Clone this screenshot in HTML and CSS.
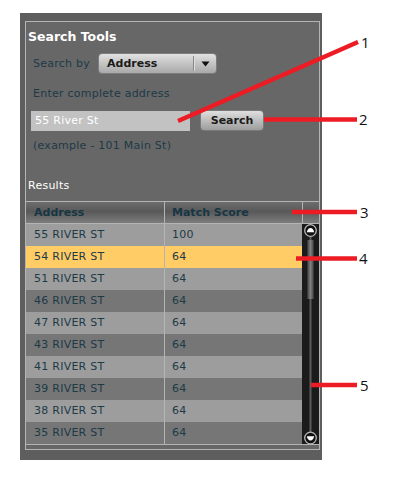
FILE: index.html
```html
<!DOCTYPE html>
<html lang="en">
<head>
  <meta charset="UTF-8" />
  <title>Search Tools</title>
  <link rel="stylesheet" href="styles.css">
</head>
<body>
  <div class="panel">
    <div class="frame">
      <h2 class="title">Search Tools</h2>

      <div class="search-by">
        <span class="label">Search by</span>
        <div class="select">
          <span class="select-value">Address</span>
          <span class="select-sep"></span>
          <svg class="select-arrow" width="9" height="6" viewBox="0 0 9 6"><path d="M0.5 0.5 H8.5 L4.5 5.5 Z" fill="#111"/></svg>
        </div>
      </div>

      <div class="hint">Enter complete address</div>
      <div class="search-row">
        <div class="input">55 River St</div>
        <button class="btn">Search</button>
      </div>
      <div class="hint example">(example - 101 Main St)</div>

      <div class="results-label">Results</div>

      <div class="results">
        <div class="thead">
          <div class="th c1">Address</div>
          <div class="th c2">Match Score</div>
          <div class="th c3"></div>
        </div>
        <div class="tbody">
          <div class="rows" id="rows"></div>
          <svg class="scrollbar" width="17" height="220" viewBox="0 0 17 220">
            <rect width="17" height="220" fill="#1b1b1b"/>
            <line x1="8.5" y1="12" x2="8.5" y2="210" stroke="#5c5c5c" stroke-width="2"/>
            <rect x="5.5" y="16" width="6" height="59" fill="#5a5a5a"/>
            <line x1="8.5" y1="16" x2="8.5" y2="75" stroke="#808080" stroke-width="2"/>
            <circle cx="8.5" cy="6.5" r="5.8" fill="#111" stroke="#b8b8b8" stroke-width="1.3"/>
            <path d="M4.8 8.3 Q5.6 4.2 8.5 4 Q11.4 4.2 12.2 8.3 Z" fill="#fff"/>
            <circle cx="8.5" cy="214" r="5.8" fill="#111" stroke="#b8b8b8" stroke-width="1.3"/>
            <path d="M4.8 212.2 Q5.6 216.3 8.5 216.5 Q11.4 216.3 12.2 212.2 Z" fill="#fff"/>
          </svg>
        </div>
      </div>
    </div>
  </div>

  <svg class="callouts" width="413" height="492" viewBox="0 0 413 492">
    <g stroke="#ed1c24" stroke-width="4.5" stroke-linecap="butt">
      <line x1="178" y1="121" x2="358" y2="42"/>
      <line x1="264" y1="119.5" x2="357" y2="119.5"/>
      <line x1="292" y1="212" x2="357" y2="212"/>
      <line x1="296" y1="258.5" x2="357" y2="258.5"/>
      <line x1="311" y1="385" x2="357" y2="385"/>
    </g>
    <g class="callout-num">
      <text x="361" y="48">1</text>
      <text x="359" y="125">2</text>
      <text x="360" y="218">3</text>
      <text x="359" y="264">4</text>
      <text x="360" y="391">5</text>
    </g>
  </svg>

  <script>
    const results = [
      ["55 RIVER ST", "100"],
      ["54 RIVER ST", "64"],
      ["51 RIVER ST", "64"],
      ["46 RIVER ST", "64"],
      ["47 RIVER ST", "64"],
      ["43 RIVER ST", "64"],
      ["41 RIVER ST", "64"],
      ["39 RIVER ST", "64"],
      ["38 RIVER ST", "64"],
      ["35 RIVER ST", "64"]
    ];

    const rows = document.getElementById("rows");
    results.forEach((r, i) => {
      const div = document.createElement("div");
      div.className = "row" + (i % 2 ? " odd" : "") + (i === 1 ? " selected" : "");
      div.innerHTML = `<div class="td c1">${r[0]}</div><div class="td c2">${r[1]}</div>`;
      rows.appendChild(div);
    });
  </script>
</body>
</html>
```

FILE: styles.css
```css
body { margin: 0; background: #fff; font-family: "DejaVu Sans", Verdana, sans-serif; font-size: 11px; color: #1d3a47; letter-spacing: 0.25px; }

.panel {
  margin: 13px 0 0 20px; width: 302px; box-sizing: border-box;
  padding: 8px 2px 10px 5px; background: #5e5e5e;
}
.frame {
  border: 1px solid #b4b4b4; background: #676767; height: 429px; box-sizing: border-box;
  display: flex; flex-direction: column;
}
.title {
  margin: 0; padding: 6px 0 0 2px; line-height: 18px; letter-spacing: 0;
  font-size: 12.5px; font-weight: bold; color: #fff;
}
.search-by { display: flex; align-items: center; margin-top: 7px; padding-left: 7px; }
.search-by .label { width: 65px; }
.select {
  width: 119px; height: 21px; box-sizing: border-box; border-radius: 4px;
  background: linear-gradient(#e2e2e2, #c4c4c4 50%, #a9a9a9);
  border: 1px solid #7d7d7d; display: flex; align-items: center;
}
.select-value { flex: 1; padding-left: 8px; font-weight: bold; color: #1a1a1a; letter-spacing: 0; }
.select-sep { width: 1px; height: 15px; background: #8a8a8a; border-right: 1px solid #ddd; }
.select-arrow { margin: 0 6px 0 6px; }

.hint { line-height: 16px; padding-left: 7px; margin-top: 12px; }
.search-row { display: flex; align-items: center; gap: 10px; margin-top: 8px; padding-left: 5px; height: 21px; }
.input {
  width: 159px; height: 20px; box-sizing: border-box; background: #c2c2c2;
  color: #fff; padding-left: 4px; line-height: 20px;
}
.btn {
  width: 64px; height: 21px; padding: 0; border: 1px solid #7a7a7a; border-radius: 4px;
  background: linear-gradient(#e0e0e0, #bdbdbd 50%, #9e9e9e);
  font-family: inherit; font-size: 11px; font-weight: bold; color: #1a1a1a; letter-spacing: 0;
}
.example { margin-top: 7px; }

.results-label { color: #fff; line-height: 16px; margin-top: 24px; padding-left: 2px; }

.results { margin-top: 7px; border-top: 1px solid #b4b4b4; border-bottom: 1px solid #b4b4b4; }
.thead { display: flex; height: 21px; border-bottom: 1px solid #b4b4b4; background: linear-gradient(#6d6d6d, #595959 45%, #7c7c7c); }
.th { font-weight: bold; line-height: 21px; color: #173644; letter-spacing: 0; }
.c1 { border-right: 1px solid #b4b4b4; padding-left: 8px; box-sizing: border-box; flex: none; width: 139px; }
.c2 { width: 137px; padding-left: 7px; box-sizing: border-box; flex: none; }
.thead .c2 { border-right: 1px solid #b4b4b4; width: 138px; }
.c3 { flex: 1; }

.tbody { display: flex; }
.rows { width: 276px; }
.scrollbar { display: block; flex: none; }
.row { display: flex; height: 22px; background: #9d9d9d; }
.row.odd { background: #767676; }
.row.selected { background: #ffcc66; }
.td { line-height: 22px; }

.callouts { position: absolute; top: 0; left: 0; pointer-events: none; }
.callout-num text { font-family: "Open Sans", sans-serif; font-size: 15px; fill: #111; letter-spacing: 0; }
```
